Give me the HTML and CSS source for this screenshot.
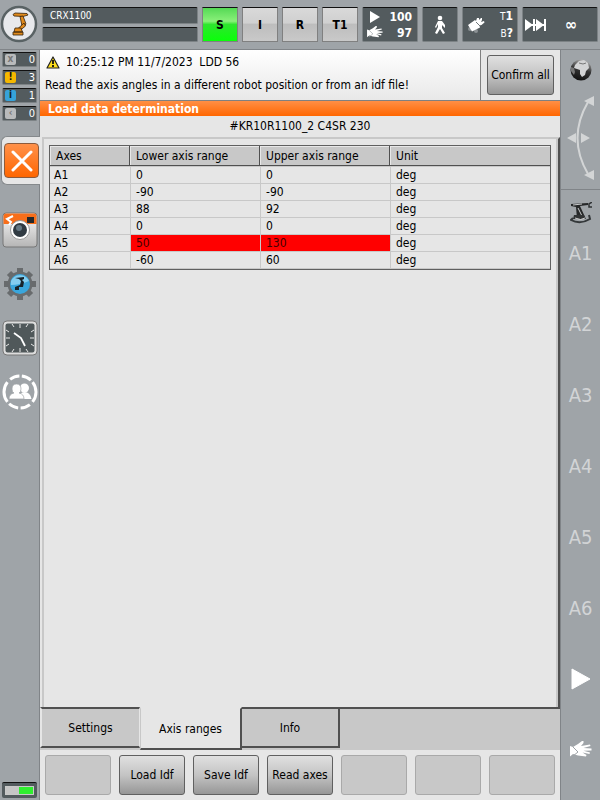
FILE: index.html
```html
<!DOCTYPE html>
<html lang="en">
<head>
<meta charset="utf-8">
<title>Load data determination</title>
<link rel="stylesheet" href="styles.css">
</head>
<body>
<svg class="defs" aria-hidden="true">
  <defs>
    <symbol id="hand" viewBox="0 0 22 18">
      <path d="M0 5l3 1 5-3 4-3 1.500 0 0 2-2.500 3 9-1.500 .5 1.500-7 2 8 .5v2l-8 .2 6.500 1.800-.5 1.500-7-1.500 4 2.500-.5 1.500-8-1-5-1.500-3 2.500z" fill="currentColor"/>
      <path d="M3 6l5 5-5 4" fill="none" stroke="#9fa4a8" stroke-width="1"/>
    </symbol>
  </defs>
</svg>
<div class="hmi">
  <header class="topbar">
    <button class="robot-menu" aria-label="Main menu">
      <svg width="38" height="38" viewBox="0 0 38 38">
        <circle cx="19" cy="19" r="17" fill="#e8e9ec" stroke="#596264" stroke-width="2.500"/>
        <g fill="#e08a1c" stroke="#33210c" stroke-width=".8">
          <path d="M13 9.500l2-1.500 12 .5 1 1.500-5 1.500-9-.5z"/>
          <path d="M20 11.500l3-.5 3 8-2 2.500-2-.5z"/>
          <path d="M24 18l1.500 3-5 4-3-1z"/>
          <path d="M15 23h6l1.500 4H14zM13 27h10v3H13z"/>
        </g>
      </svg>
    </button>
    <div class="names">
      <div class="well">CRX1100</div>
      <div class="well"></div>
    </div>
    <div class="states">
      <button class="key key-on">S</button>
      <button class="key">I</button>
      <button class="key">R</button>
      <button class="key">T1</button>
    </div>
    <button class="tile override">
      <svg width="16" height="12" viewBox="0 0 16 12"><path d="M3 0l10 6-10 6z" fill="#fff"/></svg><b>100</b>
      <svg width="16" height="13"><use href="#hand"/></svg><b>97</b>
    </button>
    <button class="tile walk" aria-label="Program run mode">
      <svg width="12" height="20" viewBox="0 0 12 20"><circle cx="6" cy="3" r="2.300" fill="#fff"/><path d="M4 6h4l3 4v3l-3-3v3l3 5-2 1-3-5-3 5-2-1 3-6V9l-2 4-1-1z" fill="#fff"/></svg>
    </button>
    <button class="tile tool">
      <svg width="18" height="18" viewBox="0 0 18 18"><circle cx="3" cy="13" r="2" fill="#8b9194"/><circle cx="9" cy="15" r="2" fill="#8b9194"/><path d="M1 9l7-5 1 1 1-3 2 0 0 2 2-2 1 0 0 2-1 2 3-1 .5 1.500-3 2.500-2 .5 .5 2-8 4z" fill="#fff"/><path d="M9 6l4 4" stroke="#70777a"/></svg>
      <span><small>T</small><b>1</b><br><small>B</small><b>?</b></span>
    </button>
    <button class="tile jog">
      <svg width="22" height="14" viewBox="0 0 22 14"><path d="M0 1l8 6-8 6zM8 1h2v12H8zM11 1l8 6-8 6zM19 1h2v12h-2zM0 6h20v2H0z" fill="#fff"/></svg>
      <b>∞</b>
    </button>
  </header>

  <aside class="left">
    <div class="counters">
      <button class="counter"><i class="chip">x</i>0</button>
      <button class="counter"><i class="chip chip-warn">!</i>3</button>
      <button class="counter"><i class="chip chip-info">i</i>1</button>
      <button class="counter"><i class="chip">‹</i>0</button>
    </div>
    <div class="closer">
      <button class="close" aria-label="Close">
        <svg width="22" height="22" viewBox="0 0 22 22"><path d="M2 2l18 18M20 2L2 20" stroke="#fff" stroke-width="3" stroke-linecap="round"/></svg>
      </button>
    </div>
    <nav class="apps">
      <button aria-label="Camera">
        <svg width="36" height="36" viewBox="0 0 36 36">
          <defs><linearGradient id="cam" x2="0" y2="1"><stop offset="0" stop-color="#fafafa"/><stop offset="1" stop-color="#b5b5b5"/></linearGradient></defs>
          <rect x="1" y="1" width="34" height="34" rx="3" fill="url(#cam)" stroke="#777"/>
          <path d="M1.500 12V4q0-2.500 2.500-2.500h28q2.500 0 2.500 2.500v8z" fill="#f76e1a"/>
          <path d="M11 4L5 7l4 3-2 3" fill="none" stroke="#fff" stroke-width="2"/>
          <rect x="25" y="5" width="7" height="6" fill="#25282a"/>
          <circle cx="18" cy="18" r="9.500" fill="#fff" stroke="#999"/><circle cx="18" cy="18" r="7" fill="#303a42"/><circle cx="17" cy="16" r="3" fill="#647783"/>
        </svg>
      </button>
      <button aria-label="Robot settings">
        <svg width="34" height="34" viewBox="0 0 34 34">
          <g stroke="#686b6d" stroke-width="6">
            <path d="M17 1v32M1 17h32M6 6l22 22M28 6L6 28"/>
          </g>
          <circle cx="17" cy="17" r="12.500" fill="#686b6d"/><circle cx="17" cy="17" r="10" fill="#39a6dc"/>
          <path d="M8 14a10 10 0 0 1 18 0q-9 4-18 4z" fill="#83cdf0"/>
          <path d="M12 11l9-1v2l-2 1 2 2-1 5-4 0 0 3h-4v-3l5-2 1-4-2-2z" fill="#18242b"/>
        </svg>
      </button>
      <button aria-label="Clock">
        <svg width="36" height="36" viewBox="0 0 36 36">
          <rect x="1" y="1" width="34" height="34" rx="4" fill="#ddd" stroke="#777"/>
          <rect x="3.500" y="3.500" width="29" height="29" rx="2" fill="#50585a"/>
          <path d="M18 4v4M18 28v4M4 18h4M28 18h4M10 4l2 3M26 4l-2 3M10 32l2-3M26 32l-2-3M4 10l3 2M32 10l-3 2M4 26l3-2M32 26l-3-2" stroke="#e8e8e8"/>
          <path d="M12 13l7 5 4 8" fill="none" stroke="#fff" stroke-width="1.800"/>
        </svg>
      </button>
      <button aria-label="User group">
        <svg width="36" height="36" viewBox="0 0 36 36">
          <circle cx="18" cy="18" r="16" fill="none" stroke="#fff" stroke-width="3" pathLength="80" stroke-dasharray="17 3 8 2 8 2 17 3 8 2 8 2" stroke-dashoffset="8.500"/>
          <circle cx="22.500" cy="14" r="4.500" fill="#fff"/><path d="M17 25q0-7 5.500-7t7 7z" fill="#fff"/>
          <path d="M7 25q0-5 5-6-2-1-2-4 0-5 4.500-5t4.500 5q0 3-2 4 5 1 5 6z" fill="#fff" stroke="#a0a5a8" stroke-width=".7"/>
        </svg>
      </button>
    </nav>
    <div class="led"><span></span></div>
  </aside>

  <main class="main">
    <section class="message">
      <div class="message-text">
        <p class="stamp">
          <svg width="14" height="13" viewBox="0 0 14 13"><path d="M7 1l6 11H1z" fill="#ffdf1c" stroke="#222" stroke-width="1.200" stroke-linejoin="round"/><path d="M7 4v4M7 9v2" stroke="#111" stroke-width="1.800"/></svg>
          10:25:12 PM 11/7/2023&nbsp; LDD 56
        </p>
        <p>Read the axis angles in a different robot position or from an idf file!</p>
      </div>
      <div class="message-action"><button class="btn">Confirm all</button></div>
    </section>
    <h1 class="title">Load data determination</h1>
    <p class="subtitle">#KR10R1100_2 C4SR 230</p>
    <section class="panel">
      <table class="axes">
        <colgroup><col class="c-axis"><col class="c-range"><col class="c-range"><col></colgroup>
        <thead><tr><th>Axes</th><th>Lower axis range</th><th>Upper axis range</th><th>Unit</th></tr></thead>
        <tbody>
          <tr><td>A1</td><td>0</td><td>0</td><td>deg</td></tr>
          <tr><td>A2</td><td>-90</td><td>-90</td><td>deg</td></tr>
          <tr><td>A3</td><td>88</td><td>92</td><td>deg</td></tr>
          <tr><td>A4</td><td>0</td><td>0</td><td>deg</td></tr>
          <tr><td>A5</td><td class="bad">50</td><td class="bad">130</td><td>deg</td></tr>
          <tr><td>A6</td><td>-60</td><td>60</td><td>deg</td></tr>
        </tbody>
      </table>
    </section>
    <div class="tabs" role="tablist">
      <button class="tab" role="tab">Settings</button>
      <button class="tab tab-on" role="tab" aria-selected="true">Axis ranges</button>
      <button class="tab" role="tab">Info</button>
      <span class="tab-rest"></span>
    </div>
    <footer class="softkeys">
      <button class="btn" disabled></button>
      <button class="btn">Load Idf</button>
      <button class="btn">Save Idf</button>
      <button class="btn">Read axes</button>
      <button class="btn" disabled></button>
      <button class="btn" disabled></button>
      <button class="btn" disabled></button>
    </footer>
  </main>

  <aside class="right">
    <div class="frame">
      <svg width="22" height="22" viewBox="0 0 22 22">
        <defs><linearGradient id="globe" x1=".7" x2=".4" y2="1"><stop offset="0" stop-color="#b5b5b5"/><stop offset=".5" stop-color="#333"/><stop offset="1" stop-color="#111"/></linearGradient></defs>
        <circle cx="11" cy="11" r="10.500" fill="url(#globe)"/>
        <path d="M5 6l4-4 5-1 4 3 1 5-3 3-1 4-3 2-2-3v-4l-3-1-3-1z" fill="#d3d4d5"/><path d="M1 8l3 1 1 4-1 3-3-4z" fill="#777"/><path d="M9 4l4 1 3-1" fill="none" stroke="#777"/>
      </svg>
      <svg width="28" height="86" viewBox="0 0 28 86" fill="#d3d5d6">
        <path d="M21 7Q0 43 21 79" fill="none" stroke="#d3d5d6" stroke-width="2"/>
        <path d="M27 1v10l-10-5zM27 85V75l-10 5zM0 43l9-5v10zM23 43l-9-5v10z"/>
      </svg>
    </div>
    <div class="jogs">
      <svg width="22" height="22" viewBox="0 0 22 22">
        <path d="M1 2l17-1v2l-8 1 5 11-8 2L6 5 1 4z" fill="#262829"/><path d="M3 3l9-1M8 6l4 8" stroke="#c9cbcc"/>
        <path d="M22 0l-3 2 0 3 3 0" fill="none" stroke="#303334" stroke-width="1.500"/>
        <path d="M3 16l-2 2q9 5 19-1l-1-4" fill="none" stroke="#34383a" stroke-width="2"/><path d="M4 13h10l2 4H3z" fill="#303334"/><path d="M5 16q6 3 10 0" stroke="#ccc" fill="none"/>
      </svg>
      <span>A1</span><span>A2</span><span>A3</span><span>A4</span><span>A5</span><span>A6</span>
      <button class="start" aria-label="Start"><svg width="20" height="22" viewBox="0 0 20 22"><path d="M1 1l18 10L1 21z" fill="#fff" stroke="#fff" stroke-linejoin="round"/></svg></button>
      <button class="start" aria-label="Manual jog"><svg width="22" height="18"><use href="#hand"/></svg></button>
    </div>
  </aside>
</div>
</body>
</html>
```
FILE: styles.css
```css
* { box-sizing: border-box; }
body {
  margin: 0;
  font: 12px/16px "DejaVu Sans Condensed", "Noto Sans", sans-serif;
  color: #000;
  background: #9fa4a8;
}
button { font: inherit; color: inherit; padding: 0; margin: 0; border: 0; background: none; }
p, h1 { margin: 0; }
svg { display: block; flex: none; }
.defs { position: absolute; width: 0; height: 0; }

.hmi {
  display: grid;
  grid-template: 50px 1fr / 40px 1fr 40px;
  min-height: 100vh;
}

/* Status bar */
.topbar {
  grid-column: 1 / -1;
  display: flex;
  gap: 4px;
  padding: 7px 2px 7px 0;
  border-bottom: 1px solid #808488;
}
.robot-menu { width: 38px; height: 34px; display: flex; align-items: center; justify-content: center; }
.names { flex: 1; display: flex; flex-direction: column; gap: 3px; }
.well, .tile, .counter {
  background: #535b5e;
  border: 1px solid #7c8285;
  border-top: 1px solid #111;
  border-radius: 2px;
  color: #fff;
}
.well { flex: 1; font-size: 10px; line-height: 15px; padding-left: 7px; }
.states { display: flex; gap: 4px; }
.key {
  width: 36px;
  border: 1px solid #808080;
  border-top: 1px solid #111;
  background: linear-gradient(#d9d9d9, #d0d0d0 45%, #bdbdbd 50%, #c9c9c9);
  font-weight: bold;
}
.key-on { background: linear-gradient(#55d955, #8af07a 40%, #2ee62e 50%, #0aff0a); }
.tile { display: flex; align-items: center; justify-content: center; width: 36px; }
.override {
  width: 56px;
  display: grid;
  grid-template-columns: 16px 1fr;
  align-content: center;
  align-items: center;
  text-align: right;
  padding: 0 5px 0 4px;
}
.tool { width: 56px; justify-content: space-between; padding: 0 4px; text-align: right; }
.tool small { font-size: 10px; }
.jog { width: 76px; justify-content: flex-start; gap: 18px; padding-left: 2px; }
.jog b { font-size: 16px; }

/* Left rail */
.left {
  display: flex;
  flex-direction: column;
  border-right: 1px solid #808488;
}
.counters { display: flex; flex-direction: column; gap: 3px; padding: 2px 2px 0; }
.counter {
  display: flex;
  justify-content: space-between;
  align-items: center;
  height: 15px;
  line-height: 12px;
  padding: 0 1px 0 2px;
  font-size: 11px;
}
.chip {
  width: 11px;
  height: 11px;
  border-radius: 2px;
  background: #b9bbbc;
  color: #777;
  font: bold 10px/10px "DejaVu Sans Condensed", sans-serif;
  text-align: center;
}
.chip-warn { background: #f5b800; color: #111; }
.chip-info { background: #36a3da; color: #10212b; }
.closer {
  margin: 15px -1px 0 1px;
  padding: 6px 0 6px 2px;
  border: 1px solid #85898c;
  border-right: 0;
  border-radius: 6px 0 0 6px;
  background: #e6e6e6;
}
.close {
  display: flex;
  align-items: center;
  justify-content: center;
  width: 35px;
  height: 35px;
  border: 1px solid #8d5b3c;
  border-radius: 4px;
  background: linear-gradient(#ff914a, #ff6600);
}
.apps { display: flex; flex-direction: column; align-items: center; gap: 18px; padding-top: 27px; }
.apps button { height: 36px; display: flex; align-items: center; }
.led {
  margin: auto 2px 2px;
  height: 16px;
  padding: 3px;
  background: #535b5e;
  border-top: 1px solid #111;
  border-radius: 2px;
}
.led span {
  display: block;
  height: 9px;
  border: 1px solid #c9c9c9;
  background: linear-gradient(90deg, #c6c6c6 50%, #2fee2f 50%);
}

/* Centre */
.main { display: flex; flex-direction: column; background: #e6e6e6; min-width: 0; }
.message { display: flex; height: 51px; border-bottom: 1px solid #808080; }
.message-text {
  flex: 1;
  padding: 4px 5px;
  background: linear-gradient(#fff, #e8e8e8);
  border-right: 1px solid #808080;
}
.message-text p + p { margin-top: 7px; }
.stamp { display: flex; gap: 6px; align-items: center; padding-left: 1px; }
.message-action { width: 79px; padding: 5px 6px; display: flex; }
.btn {
  flex: 1;
  height: 40px;
  border: 1px solid #606060;
  border-radius: 3px;
  background: linear-gradient(#e0e0e0, #c4c4c4 50%, #969696);
  white-space: nowrap;
}
.btn:disabled { border-color: #a9a9a9; background: #c8c8c8; }
.title {
  padding-left: 8px;
  height: 15px;
  font-size: 12px;
  line-height: 16px;
  color: #fff;
  background: linear-gradient(#ff8f45, #ff6600);
}
.subtitle { text-align: center; height: 21px; line-height: 20px; }
.panel {
  flex: 1;
  padding: 6px 5px;
  border: 2px solid #c8c8c8;
  border-right-color: #505050;
  border-bottom: 0;
  box-shadow: inset -2px 0 #c8c8c8;
  margin-left: 2px;
}
.panel { padding-right: 7px; }
.axes {
  width: 100%;
  table-layout: fixed;
  border-collapse: separate;
  border-spacing: 0;
  border: 1px solid #606060;
}
.c-axis { width: 80px; }
.c-range { width: 130px; }
.axes th {
  height: 20px;
  padding: 1px 6px 0;
  font-weight: normal;
  text-align: left;
  background: #c8c8c8;
  border: 1px solid #505050;
  border-width: 0 1px 1px 0;
  box-shadow: inset 1px 1px #e8e8e8;
}
.axes th:last-child { border-right: 0; }
.axes td {
  height: 17px;
  padding: 0 5px;
  line-height: 16px;
  border: 1px solid #c8c8c8;
  border-width: 0 0 1px 1px;
}
.axes td:first-child { border-left: 0; padding-left: 4px; }
.axes tbody tr:first-child td { height: 18px; border-top-width: 1px; }
.axes .bad { background: #f00; color: #400; }

.tabs { display: flex; height: 43px; background: #c8c8c8; }
.tab {
  width: 98px;
  height: 41px;
  background: #c8c8c8;
  border: 2px solid #505050;
  border-left: 0;
}
.tab:first-child { width: 100px; border-left: 2px solid #e6e6e6; border-right: 1px solid #e6e6e6; }
.tab-on { width: 102px; height: 43px; background: #e6e6e6; border-top-color: #e6e6e6; border-left: 1px solid #c8c8c8; }
.tab-rest { flex: 1; border-top: 2px solid #505050; }

.softkeys { display: flex; gap: 8px; padding: 5px; }

/* Right rail */
.right { border-left: 1px solid #808488; display: flex; flex-direction: column; }
.frame {
  display: flex;
  flex-direction: column;
  align-items: center;
  gap: 14px;
  height: 140px;
  padding-top: 9px;
  border-bottom: 1px solid #808488;
}
.jogs {
  display: flex;
  flex-direction: column;
  align-items: center;
  padding-top: 12px;
  font: 20px/24px "DejaVu Sans Condensed", sans-serif;
  color: #d2d4d6;
}
.jogs span { height: 24px; margin: 17px 0 31px; }
.jogs span + span { margin-top: 16px; }
.start { height: 22px; margin: 17px 0 32px; display: flex; align-items: center; color: #fff; }
```
